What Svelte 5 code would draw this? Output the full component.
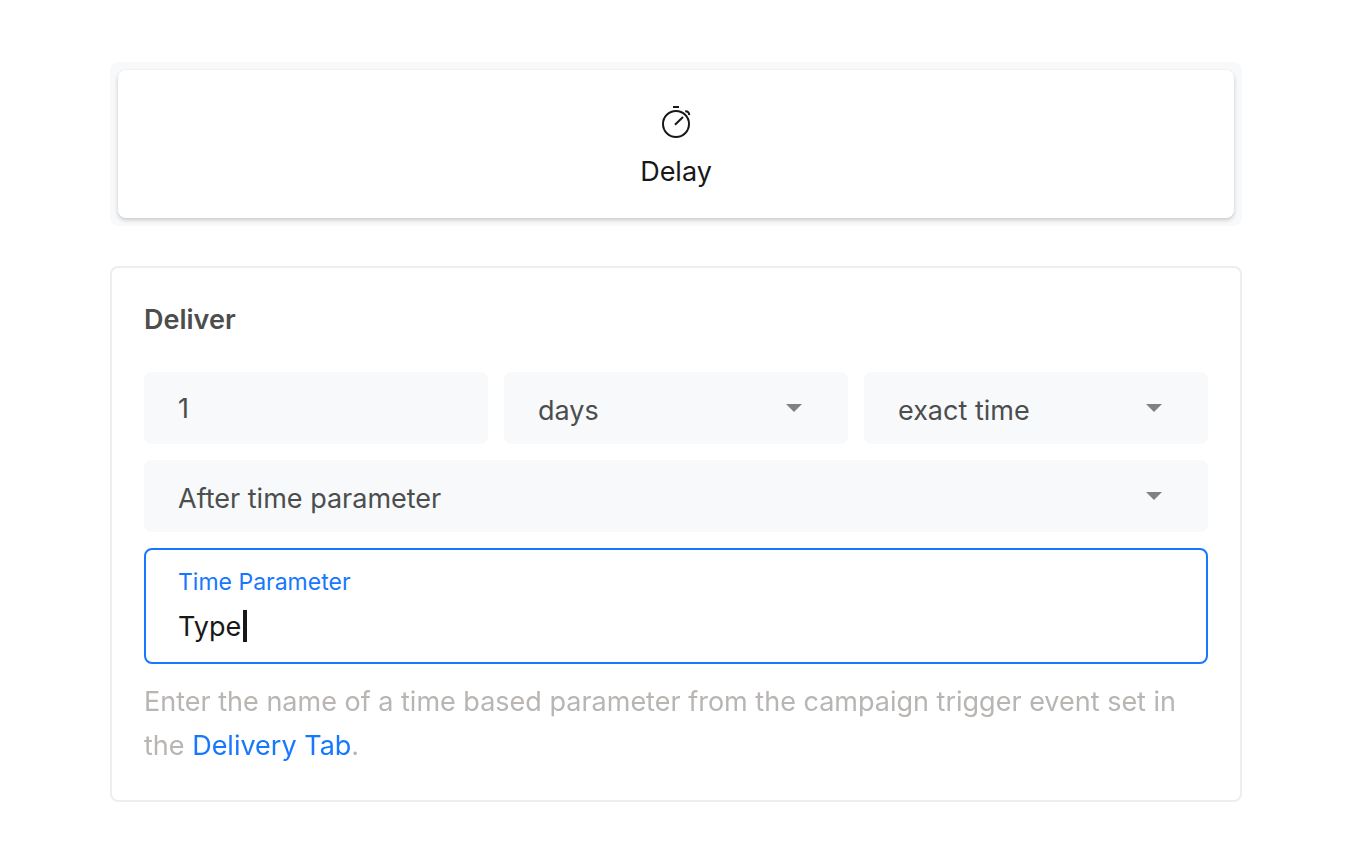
<script lang="ts">
  import { onMount } from 'svelte';

  let amount = $state('1');
  let unit = $state('days');
  let precision = $state('exact time');
  let anchor = $state('After time parameter');
  let parameter = $state('Type');

  let parameterInput: HTMLInputElement;

  onMount(() => {
    parameterInput.focus();
  });
</script>

<main class="page">
  <div class="step-types">
    <button class="step-type" type="button" aria-pressed="true">
      <svg class="step-icon" viewBox="0 0 32 32" aria-hidden="true">
        <circle cx="16" cy="18" r="13" />
        <path d="M13 1h6M15 18.7l8-7.7M25.2 5.2c2.5-.1 4.2 1.4 4 4" />
      </svg>
      <span>Delay</span>
    </button>
  </div>

  <section class="panel">
    <h2 class="panel-title">Deliver</h2>

    <div class="fields">
      <input class="control" type="text" inputmode="numeric" aria-label="Delay amount" bind:value={amount} />
      <div class="select">
        <select class="control" aria-label="Delay unit" bind:value={unit}>
          <option>minutes</option>
          <option>hours</option>
          <option>days</option>
          <option>weeks</option>
        </select>
      </div>
      <div class="select">
        <select class="control" aria-label="Delivery time" bind:value={precision}>
          <option>exact time</option>
          <option>specific time</option>
        </select>
      </div>
      <div class="select wide">
        <select class="control" aria-label="Delay starts" bind:value={anchor}>
          <option>After campaign trigger</option>
          <option>After time parameter</option>
        </select>
      </div>

      <div class="parameter wide">
        <label for="time-parameter">Time Parameter</label>
        <div class="parameter-value">
          <input id="time-parameter" type="text" bind:this={parameterInput} bind:value={parameter} />
          <span class="caret"></span>
        </div>
      </div>
    </div>

    <p class="help">
      Enter the name of a time based parameter from the campaign trigger event set in the
      <a href="#delivery">Delivery Tab</a>.
    </p>
  </section>
</main>

<style>
  :global(body) {
    background: #fff;
  }

  .page {
    display: flex;
    flex-direction: column;
    gap: 40px;
    padding: 62px 118px 56px 110px;
    font-family: Inter, sans-serif;
    font-size: 27px;
    color: #4c4e4e;
  }

  .page * {
    box-sizing: border-box;
  }

  .step-types {
    display: flex;
    padding: 8px;
    border-radius: 8px;
    background: #f8f9fb;
  }

  .step-type {
    flex: 1;
    display: flex;
    flex-direction: column;
    align-items: center;
    gap: 16px;
    padding: 36px 16px 28px;
    border: 0;
    border-radius: 8px;
    background: #fff;
    box-shadow: 0 2px 4px rgba(0, 0, 0, 0.2);
    font: inherit;
    line-height: 36px;
    color: #181818;
  }

  .step-icon {
    width: 32px;
    height: 32px;
    fill: none;
    stroke: #181818;
    stroke-width: 2;
  }

  .panel {
    padding: 32px;
    border: 2px solid #eee;
    border-radius: 8px;
  }

  .panel-title {
    margin: 0 0 32px;
    font-size: 27px;
    font-weight: 600;
    line-height: 40px;
  }

  .fields {
    display: grid;
    grid-template-columns: repeat(3, 1fr);
    gap: 16px;
  }

  .wide {
    grid-column: 1 / -1;
  }

  .control {
    display: block;
    width: 100%;
    min-width: 0;
    height: 72px;
    padding: 0 34px;
    border: 0;
    border-radius: 8px;
    outline: 0;
    background: #f8f9fb;
    font: inherit;
    color: inherit;
    appearance: none;
  }

  .select {
    position: relative;
  }

  .select .control {
    padding-top: 4px;
  }

  /* drop-down arrow */
  .select::after {
    content: '';
    position: absolute;
    top: 32px;
    right: 46px;
    width: 16px;
    height: 8px;
    background: #808184;
    clip-path: polygon(0 0, 100% 0, 50% 100%);
    pointer-events: none;
  }

  .parameter {
    display: flex;
    flex-direction: column;
    gap: 12px;
    padding: 16px 32px 20px;
    border: 2px solid #1677ff;
    border-radius: 8px;
  }

  .parameter label {
    font-size: 23px;
    line-height: 32px;
    color: #1677ff;
  }

  .parameter-value {
    display: flex;
    gap: 2px;
    height: 32px;
  }

  .parameter-value input {
    field-sizing: content;
    padding: 0;
    border: 0;
    outline: 0;
    background: none;
    font: inherit;
    color: #181818;
    caret-color: transparent;
  }

  .caret {
    width: 4px;
    background: #181818;
  }

  .help {
    margin: 16px 0 0;
    line-height: 44px;
    color: #b8b5b2;
  }

  .help a {
    color: #1677ff;
    text-decoration: none;
  }
</style>
